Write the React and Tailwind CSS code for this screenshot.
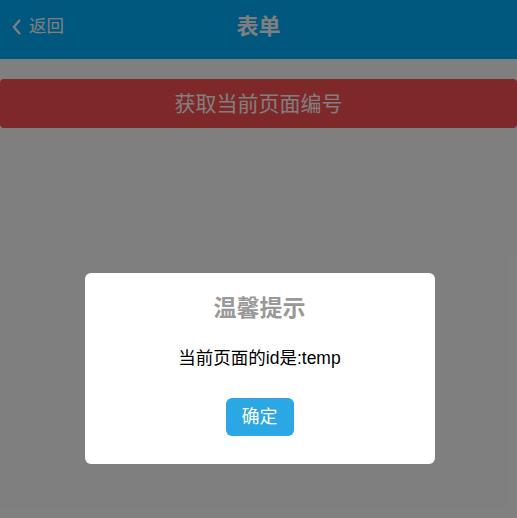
export default function App() {
  return (
    <div
      className="relative h-[518px] w-full overflow-hidden bg-white"
      style={{ fontFamily: '"Liberation Sans", "Noto Sans CJK SC", sans-serif' }}
    >
      {/* header */}
      <div className="relative flex h-[59px] items-center bg-[#00b0ff] px-3 text-white">
        <div className="flex -translate-y-[3px] items-center gap-[8px]">
          <svg width="9" height="16" viewBox="0 0 9 16" fill="none">
            <path d="M7.5 1.5 L1.8 8 L7.5 14.5" stroke="#ffffff" strokeWidth="2.2" strokeLinecap="round" strokeLinejoin="round" />
          </svg>
          <span className="text-[17.5px] leading-none">返回</span>
        </div>
        <div className="absolute inset-x-0 -translate-y-[3px] text-center text-[22px] font-bold pointer-events-none">表单</div>
      </div>

      <div className="pt-[20px]">
        <button className="flex h-[49px] w-full items-center justify-center rounded-[4px] bg-[#ff5054] text-[21px] text-white">
          获取当前页面编号
        </button>
      </div>

      {/* overlay */}
      <div className="absolute inset-0 bg-black/50">
        <div className="mx-auto mt-[273px] w-[350px] translate-x-[1px] rounded-[6px] bg-white px-4 pb-[28px] pt-[20px] text-center">
          <div className="text-[23px] font-bold leading-[30px] text-[#999999]">温馨提示</div>
          <div className="mt-[23px] text-[17.5px] leading-[24px] text-black">当前页面的id是:temp</div>
          <button className="mt-[28px] h-[38px] w-[68px] rounded-[6px] bg-[#2ba8e4] text-[18px] text-white">
            确定
          </button>
        </div>
      </div>
    </div>
  );
}
